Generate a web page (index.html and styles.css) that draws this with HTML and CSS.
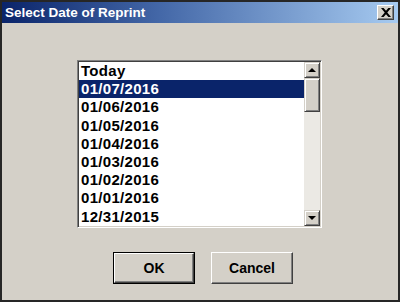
FILE: index.html
```html
<!DOCTYPE html>
<html>
<head>
<meta charset="utf-8">
<link rel="stylesheet" href="styles.css">
</head>
<body>
<div class="window">
  <div class="titlebar">
    <span class="title">Select Date of Reprint</span>
    <div class="close">
      <svg width="10" height="9" viewBox="0 0 10 9"><path d="M0 0h2.6l2.4 2.8 2.4-2.8H10L6.3 4.5 10 9H7.4L5 6.2 2.6 9H0l3.7-4.5z" fill="#000"/></svg>
    </div>
  </div>
  <div class="content">
    <div class="listbox">
      <ul class="items">
        <li>Today</li>
        <li class="selected">01/07/2016</li>
        <li>01/06/2016</li>
        <li>01/05/2016</li>
        <li>01/04/2016</li>
        <li>01/03/2016</li>
        <li>01/02/2016</li>
        <li>01/01/2016</li>
        <li>12/31/2015</li>
      </ul>
      <div class="scrollbar">
        <div class="sbtn"><span class="arrow-up"></span></div>
        <div class="thumb"></div>
        <div class="track"></div>
        <div class="sbtn"><span class="arrow-down"></span></div>
      </div>
    </div>
    <div class="buttons">
      <div class="btn default"><div class="btn-inner">OK</div></div>
      <div class="btn"><div class="btn-inner">Cancel</div></div>
    </div>
  </div>
</div>
</body>
</html>
```
FILE: styles.css
```css
html, body {
  margin: 0;
  padding: 0;
  background: #d4d0c8;
}
.window {
  width: 400px;
  height: 302px;
  box-sizing: border-box;
  border: 2px solid #262626;
  background: #d4d0c8;
  display: flex;
  flex-direction: column;
  font-family: "Liberation Sans", Arial, sans-serif;
}
.titlebar {
  height: 21px;
  background: linear-gradient(to right, #0a246a 0%, #4468a8 40%, #a6caf0 100%);
  display: flex;
  align-items: center;
  justify-content: space-between;
  padding: 0 4px 0 3px;
}
.title {
  color: #fff;
  font-weight: bold;
  font-size: 13.5px;
  font-family: "Liberation Sans", Arial, sans-serif;
}
.close {
  width: 17px;
  height: 15px;
  box-sizing: border-box;
  background: #d4d0c8;
  border: 1px solid;
  border-color: #fff #404040 #404040 #fff;
  box-shadow: inset -1px -1px #808080;
  display: flex;
  align-items: center;
  justify-content: center;
}
.content {
  flex: 1;
  display: flex;
  flex-direction: column;
  padding: 37px 0 0 75px;
}
.listbox {
  width: 245px;
  height: 168px;
  box-sizing: border-box;
  border: 1px solid;
  border-color: #808080 #fff #fff #808080;
  box-shadow: inset 1px 1px #404040, inset -1px -1px #d4d0c8;
  padding: 1px;
  display: flex;
  background: #fff;
}
.items {
  list-style: none;
  margin: 0;
  padding: 0;
  flex: 1;
  background: #fff;
}
.items li {
  height: 18.2px;
  line-height: 17.5px;
  padding-left: 2px;
  font-size: 15px;
  font-weight: bold;
  letter-spacing: 0.3px;
  color: #000;
}
.items li.selected {
  background: #0a246a;
  color: #fff;
}
.scrollbar {
  width: 16px;
  display: flex;
  flex-direction: column;
}
.sbtn, .thumb {
  box-sizing: border-box;
  background: #d4d0c8;
  border: 1px solid;
  border-color: #d4d0c8 #404040 #404040 #d4d0c8;
  box-shadow: inset 1px 1px #fff, inset -1px -1px #808080;
  display: flex;
  align-items: center;
  justify-content: center;
}
.sbtn {
  height: 16px;
}
.thumb {
  height: 34px;
}
.track {
  flex: 1;
  background: #ebe9e4;
}
.arrow-up {
  width: 0;
  height: 0;
  border-left: 4px solid transparent;
  border-right: 4px solid transparent;
  border-bottom: 4px solid #000;
}
.arrow-down {
  width: 0;
  height: 0;
  border-left: 4px solid transparent;
  border-right: 4px solid transparent;
  border-top: 4px solid #000;
}
.buttons {
  display: flex;
  gap: 16px;
  margin: 24px 0 0 36px;
}
.btn {
  width: 82px;
  height: 32px;
  box-sizing: border-box;
  background: #d4d0c8;
  border: 1px solid;
  border-color: #fff #404040 #404040 #fff;
  box-shadow: inset -1px -1px #808080;
  display: flex;
}
.btn.default {
  border: 1px solid #000;
  box-shadow: none;
}
.btn-inner {
  flex: 1;
  display: flex;
  align-items: center;
  justify-content: center;
  font-size: 14px;
  font-weight: bold;
  color: #000;
}
.btn.default .btn-inner {
  border: 1px solid;
  border-color: #fff #404040 #404040 #fff;
  box-shadow: inset -1px -1px #808080;
}
```
